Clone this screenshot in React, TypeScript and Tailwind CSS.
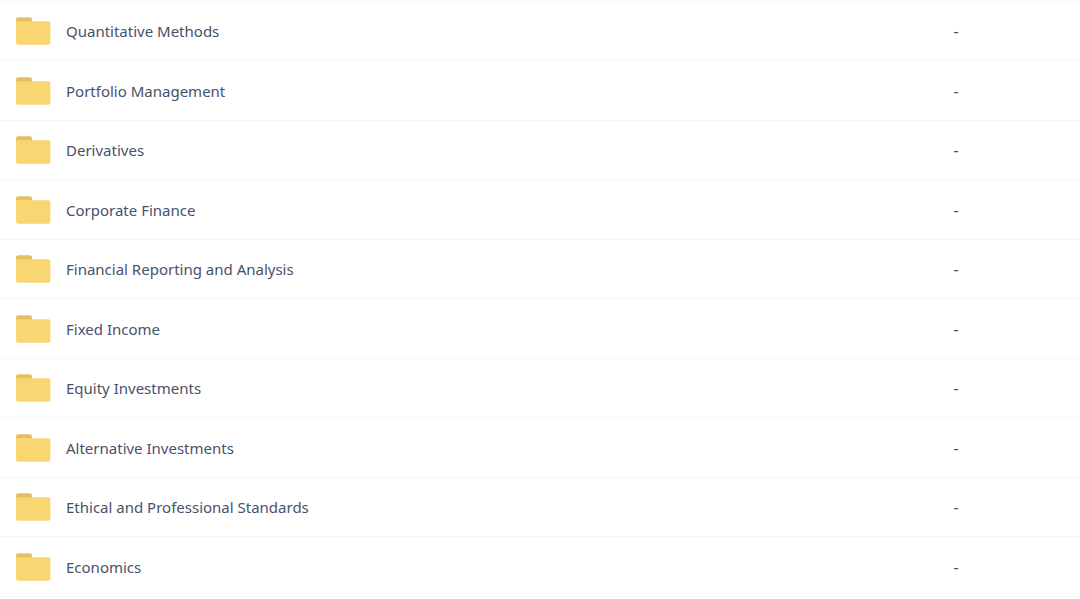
const subjects = [
  "Quantitative Methods",
  "Portfolio Management",
  "Derivatives",
  "Corporate Finance",
  "Financial Reporting and Analysis",
  "Fixed Income",
  "Equity Investments",
  "Alternative Investments",
  "Ethical and Professional Standards",
  "Economics",
];

function FolderIcon() {
  return (
    <svg viewBox="0 0 36 30" className="h-[30px] w-9 shrink-0" aria-hidden="true">
      <path d="M1 3.5Q1 1.2 3.3 1.2H14.7Q17 1.2 17 3.5V8H1Z" fill="#e5c060" />
      <path d="M1 5.2H33.4Q35.4 5.2 35.4 7.2V26.8Q35.4 28.8 33.4 28.8H3Q1 28.8 1 26.8Z" fill="#f9d671" />
    </svg>
  );
}

export default function App() {
  return (
    <main className="bg-white pt-px font-['Noto_Sans',sans-serif] text-[15px] leading-6 text-[#48516a]">
      <table className="w-full table-fixed border-collapse">
        <colgroup>
          <col />
          <col className="w-[12%]" />
        </colgroup>
        <tbody>
          {subjects.map((name) => (
            <tr key={name} className="h-[59px] border-y border-[#f5f5fb] even:h-[60px]">
              <td className="p-0 pl-[15px]">
                <div className="flex items-center gap-[15px]">
                  <FolderIcon />
                  <span>{name}</span>
                </div>
              </td>
              <td className="p-0 pl-[3px] text-base leading-6 text-[#4a4a4a]">-</td>
            </tr>
          ))}
        </tbody>
      </table>
    </main>
  );
}
